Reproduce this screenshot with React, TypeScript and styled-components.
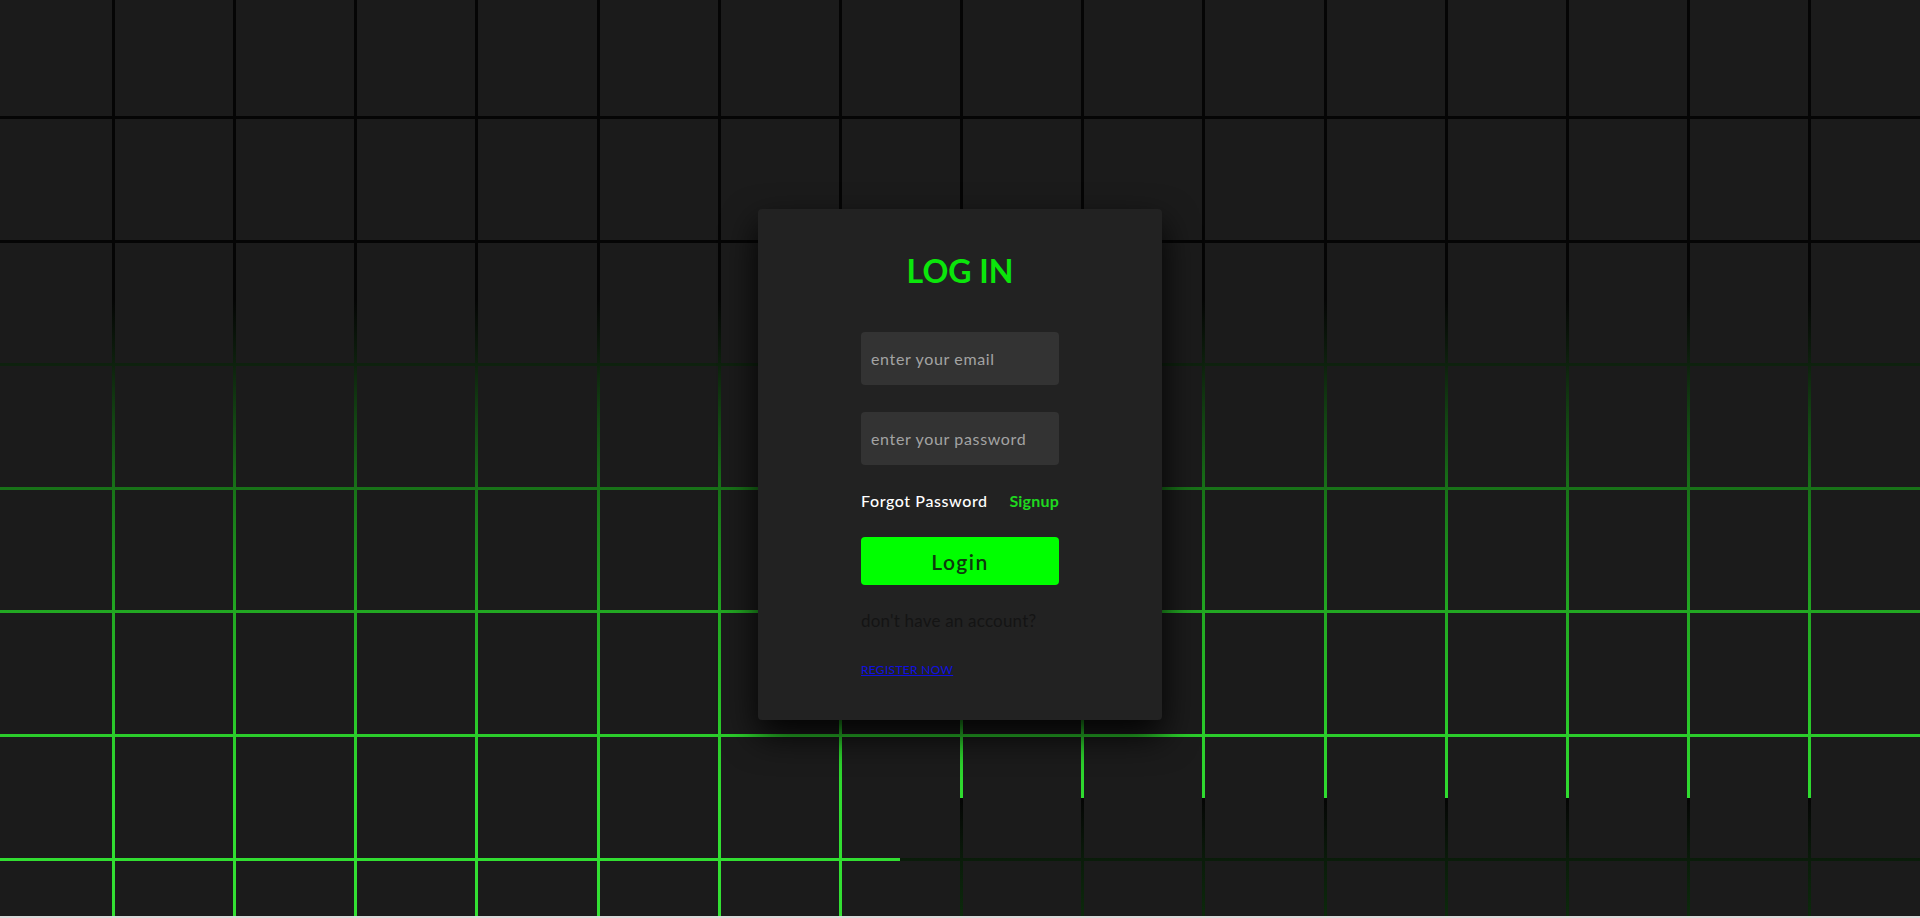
import React from "react";
import styled, { createGlobalStyle } from "styled-components";

const GlobalStyle = createGlobalStyle`
  html, body {
    margin: 0;
    padding: 0;
    background: #d9d9d9;
    overflow: hidden;
  }
  * { box-sizing: border-box; }
`;

const glowFull = `linear-gradient(180deg,
  #050505 0px, #050505 300px, #0e220e 365px, #187218 488px,
  #22a822 612px, #2bcc2b 735px, #30dc30 798px,
  #050505 798px, #0a1c0a 860px, #0c2a0c 916px)`;

const glowLeft = `linear-gradient(180deg,
  #050505 0px, #050505 300px, #0e220e 365px, #187218 488px,
  #22a822 612px, #2bcc2b 735px, #30dc30 798px, #33e033 916px)`;

const Scene = styled.section`
  position: relative;
  width: 100%;
  height: 916px;
  overflow: hidden;
  background: ${glowLeft} 0 0 / 900px 100% no-repeat, ${glowFull};
`;

const Grid = styled.div`
  display: grid;
  grid-template-columns: repeat(16, 118.2px);
  grid-auto-rows: 120.6px;
  gap: 3px;
  margin: -4.6px 0 0 -6.4px;
`;

const Cell = styled.span`
  display: block;
  background: #1b1b1b;
`;

const Card = styled.div`
  position: absolute;
  top: 209px;
  left: 50%;
  transform: translateX(-50%);
  width: 404px;
  height: 511px;
  background: #222222;
  border-radius: 4px;
  box-shadow: 0 15px 35px rgba(0, 0, 0, 0.9);
  display: flex;
  flex-direction: column;
  align-items: center;
  padding-top: 42px;
  font-family: Lato, "Noto Sans", sans-serif;
`;

const Title = styled.h2`
  margin: 0 0 41px;
  height: 40px;
  line-height: 40px;
  font-size: 32px;
  font-weight: 700;
  color: #0be60b;
  text-transform: uppercase;
`;

const Form = styled.form`
  width: 198px;
  display: flex;
  flex-direction: column;
`;

const Field = styled.input`
  width: 100%;
  height: 53px;
  border: none;
  outline: none;
  border-radius: 4px;
  background: #333333;
  padding: 0 10px;
  margin-bottom: 27px;
  font-family: Lato, "Noto Sans", sans-serif;
  font-size: 16px;
  letter-spacing: 0.65px;
  color: #fff;
  &::placeholder {
    color: #a3a3a3;
  }
`;

const LinksRow = styled.div`
  display: flex;
  justify-content: space-between;
  align-items: center;
  height: 20px;
  margin-top: -1px;
  margin-bottom: 26px;
`;

const TextLink = styled.a<{ $accent?: boolean }>`
  font-size: 16px;
  line-height: 20px;
  font-weight: ${(p) => (p.$accent ? 700 : 500)};
  color: ${(p) => (p.$accent ? "#1fd81f" : "#ffffff")};
  text-decoration: none;
  letter-spacing: ${(p) => (p.$accent ? "0.2px" : "0.6px")};
`;

const SubmitButton = styled.button`
  height: 48px;
  width: 100%;
  border: none;
  border-radius: 4px;
  background: #00ff00;
  color: #0d3a0d;
  font-family: Lato, "Noto Sans", sans-serif;
  font-size: 21px;
  font-weight: 600;
  letter-spacing: 1.5px;
  cursor: pointer;
  margin-bottom: 26px;
`;

const Hint = styled.p`
  margin: 0 0 27px;
  height: 20px;
  line-height: 20px;
  font-size: 17px;
  color: #141414;
  letter-spacing: 0.2px;
`;

const Register = styled.a`
  font-size: 12px;
  line-height: 16px;
  color: #1010e0;
  text-decoration: underline;
  letter-spacing: 0.3px;
`;

const cells = Array.from({ length: 16 * 8 }, (_, i) => i);

export default function App() {
  return (
    <>
      <GlobalStyle />
      <Scene>
        <Grid>
          {cells.map((i) => (
            <Cell key={i} />
          ))}
        </Grid>
        <Card>
          <Title>Log In</Title>
          <Form onSubmit={(e) => e.preventDefault()}>
            <Field type="email" placeholder="enter your email" />
            <Field type="password" placeholder="enter your password" />
            <LinksRow>
              <TextLink href="#">Forgot Password</TextLink>
              <TextLink href="#" $accent>
                Signup
              </TextLink>
            </LinksRow>
            <SubmitButton type="submit">Login</SubmitButton>
            <Hint>don't have an account?</Hint>
            <div>
              <Register href="#">REGISTER NOW</Register>
            </div>
          </Form>
        </Card>
      </Scene>
    </>
  );
}
